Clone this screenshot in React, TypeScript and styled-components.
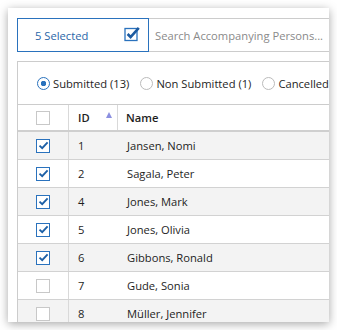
import React from 'react';
import styled, {createGlobalStyle} from 'styled-components';

const GlobalStyle = createGlobalStyle`
  html, body {
    margin: 0;
    padding: 0;
    background: #ffffff;
  }
  body {
    font-family: "Open Sans", "Liberation Sans", sans-serif;
    font-size: 11.2px;
    color: #1e1e1e;
  }
`

type Person = {id: number, name: string, checked: boolean}

const people: Person[] = [
    {id: 1, name: 'Jansen, Nomi', checked: true},
    {id: 2, name: 'Sagala, Peter', checked: true},
    {id: 4, name: 'Jones, Mark', checked: true},
    {id: 5, name: 'Jones, Olivia', checked: true},
    {id: 6, name: 'Gibbons, Ronald', checked: true},
    {id: 7, name: 'Gude, Sonia', checked: false},
    {id: 8, name: 'Müller, Jennifer', checked: false},
];

const Tick = () => (
    <svg width="11" height="9" viewBox="0 0 11 9">
        <path d="M1.5 4.6 L4.2 7.2 L9.6 1.4" fill="none" stroke="#1c5fa6" strokeWidth="1.9"/>
    </svg>
);

const CheckBox = ({checked}: { checked: boolean }) => (
    <BoxStyle $checked={checked}>
        {checked && <Tick/>}
    </BoxStyle>
);

const Radio = ({checked, label}: { checked: boolean, label: string }) => (
    <RadioItem>
        <RadioCircle $checked={checked}/>
        <span>{label}</span>
    </RadioItem>
);

export default function App() {
    return (
        <>
            <GlobalStyle/>
            <Panel>
                <TopRow>
                    <SelectedStyle>
                        <span>5 Selected</span>
                        <SelectIcon>
                            <svg width="17" height="16" viewBox="0 0 17 16">
                                <rect x="1" y="2.5" width="12" height="12" fill="#fff" stroke="#2a72bd" strokeWidth="1.3"/>
                                <path d="M3.6 8 L6.6 11 L14.8 1.8" fill="none" stroke="#1c5aa0" strokeWidth="2.6"/>
                            </svg>
                        </SelectIcon>
                    </SelectedStyle>
                    <SearchStyle>Search Accompanying Persons...</SearchStyle>
                </TopRow>
                <TableBox>
                    <RadioRow>
                        <Radio checked label="Submitted (13)"/>
                        <Radio checked={false} label="Non Submitted (1)"/>
                        <Radio checked={false} label="Cancelled"/>
                    </RadioRow>
                    <HeaderRow>
                        <CheckCell><CheckBox checked={false}/></CheckCell>
                        <IdCell $head>
                            ID
                            <SortArrow/>
                        </IdCell>
                        <NameCell $head>Name</NameCell>
                    </HeaderRow>
                    {people.map((p, i) => (
                        <Row key={p.id} $odd={i % 2 === 0}>
                            <CheckCell><CheckBox checked={p.checked}/></CheckCell>
                            <IdCell>{p.id}</IdCell>
                            <NameCell>{p.name}</NameCell>
                        </Row>
                    ))}
                </TableBox>
            </Panel>
        </>
    );
}

const Panel = styled.div`
  margin: 8px;
  width: 321px;
  height: 314px;
  box-sizing: border-box;
  padding: 10px 0 0 9px;
  background: #ffffff;
  overflow: hidden;
  box-shadow: 0 2px 9px rgba(0, 0, 0, 0.35);
`

const TopRow = styled.div`
  display: flex;
  width: 360px;
  height: 34px;
`

const SelectedStyle = styled.div`
  width: 132px;
  box-sizing: border-box;
  border: 1px solid #2a72bd;
  display: flex;
  align-items: center;
  justify-content: space-between;
  padding: 0 7px 0 17px;
  color: #2a66a8;
`

const SelectIcon = styled.div`
  display: flex;
  margin-top: -2px;
`

const SearchStyle = styled.div`
  flex-grow: 1;
  box-sizing: border-box;
  border: 1px solid #cccccc;
  border-left: none;
  display: flex;
  align-items: center;
  padding-left: 6px;
  color: #8a8a8a;
`

const TableBox = styled.div`
  margin-top: 9px;
  width: 380px;
  border-left: 1px solid #cccccc;
  border-top: 1px solid #cccccc;
`

const RadioRow = styled.div`
  height: 42px;
  display: flex;
  align-items: center;
  padding-left: 19px;
  column-gap: 11px;
  border-bottom: 1px solid #cccccc;
`

const RadioItem = styled.div`
  display: flex;
  align-items: center;
  column-gap: 3px;
`

const RadioCircle = styled.div<{ $checked: boolean }>`
  width: 13px;
  height: 13px;
  box-sizing: border-box;
  border-radius: 50%;
  border: 1px solid ${p => p.$checked ? '#2a72bd' : '#bbbbbb'};
  background: ${p => p.$checked
          ? 'radial-gradient(circle, #2a72bd 0 2.5px, #ffffff 3px)'
          : '#ffffff'};
`

const HeaderRow = styled.div`
  display: flex;
  height: 25px;
  background: #ffffff;
  border-bottom: 2px solid #cfcfcf;
`

const Row = styled.div<{ $odd: boolean }>`
  display: flex;
  height: 27px;
  background: ${p => p.$odd ? '#f3f3f3' : '#ffffff'};
  border-bottom: 1px solid #d2d2d2;
`

const CheckCell = styled.div`
  width: 51px;
  flex-shrink: 0;
  display: flex;
  align-items: center;
  justify-content: center;
  border-right: 1px solid #d9d9d9;
  box-sizing: border-box;
`

const IdCell = styled.div<{ $head?: boolean }>`
  width: 49px;
  flex-shrink: 0;
  box-sizing: border-box;
  position: relative;
  display: flex;
  align-items: center;
  padding-left: 9px;
  font-weight: ${p => p.$head ? 600 : 400};
  border-right: ${p => p.$head ? '1px solid #d9d9d9' : 'none'};
  margin-right: ${p => p.$head ? '0' : '1px'};
`

const NameCell = styled.div<{ $head?: boolean }>`
  flex-grow: 1;
  display: flex;
  align-items: center;
  padding-left: 8px;
  font-weight: ${p => p.$head ? 600 : 400};
`

const SortArrow = styled.div`
  position: absolute;
  top: 7px;
  right: 5px;
  width: 0;
  height: 0;
  border-left: 3.5px solid transparent;
  border-right: 3.5px solid transparent;
  border-bottom: 6px solid #8b8fe0;
`

const BoxStyle = styled.div<{ $checked: boolean }>`
  width: 14px;
  height: 14px;
  box-sizing: border-box;
  border: 1px solid ${p => p.$checked ? '#2a72bd' : '#c8c8c8'};
  background: #ffffff;
  display: flex;
  align-items: center;
  justify-content: center;
`
